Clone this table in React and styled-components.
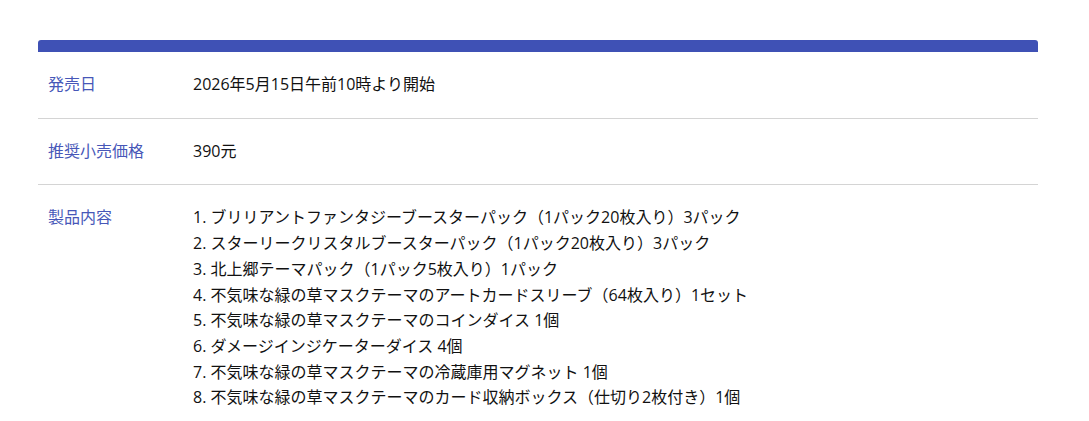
import React from "react";
import styled, { createGlobalStyle } from "styled-components";

const Global = createGlobalStyle`
  html, body { margin: 0; padding: 0; background: #fff; }
  body { font-family: "Open Sans", "Noto Sans CJK JP", sans-serif; }
`;

const Page = styled.div`
  padding: 40px 51px 0 38px;
`;

const Card = styled.section`
  width: 1000px;
`;

const TopBar = styled.div`
  height: 12px;
  background: #3f51b5;
  border-radius: 3px 3px 0 0;
`;

const Row = styled.div`
  display: grid;
  grid-template-columns: 145px 1fr;
  padding: 20px 0 20px 10px;
  border-bottom: ${(p) => (p.$last ? "none" : "1px solid #d4d4d4")};
  font-size: 16px;
  line-height: 25.7px;
`;

const Label = styled.div`
  color: #4757b8;
`;

const Value = styled.div`
  color: #111;
`;

const List = styled.ol`
  margin: 0;
  padding: 0;
  list-style: none;
`;

const Item = styled.li``;

const items = [
  "ブリリアントファンタジーブースターパック（1パック20枚入り）3パック",
  "スターリークリスタルブースターパック（1パック20枚入り）3パック",
  "北上郷テーマパック（1パック5枚入り）1パック",
  "不気味な緑の草マスクテーマのアートカードスリーブ（64枚入り）1セット",
  "不気味な緑の草マスクテーマのコインダイス 1個",
  "ダメージインジケーターダイス 4個",
  "不気味な緑の草マスクテーマの冷蔵庫用マグネット 1個",
  "不気味な緑の草マスクテーマのカード収納ボックス（仕切り2枚付き）1個",
];

export default function App() {
  return (
    <>
      <Global />
      <Page>
        <Card>
          <TopBar />
          <Row>
            <Label>発売日</Label>
            <Value>2026年5月15日午前10時より開始</Value>
          </Row>
          <Row>
            <Label>推奨小売価格</Label>
            <Value>390元</Value>
          </Row>
          <Row $last>
            <Label>製品内容</Label>
            <Value>
              <List>
                {items.map((t, i) => (
                  <Item key={i}>
                    {i + 1}. {t}
                  </Item>
                ))}
              </List>
            </Value>
          </Row>
        </Card>
      </Page>
    </>
  );
}
